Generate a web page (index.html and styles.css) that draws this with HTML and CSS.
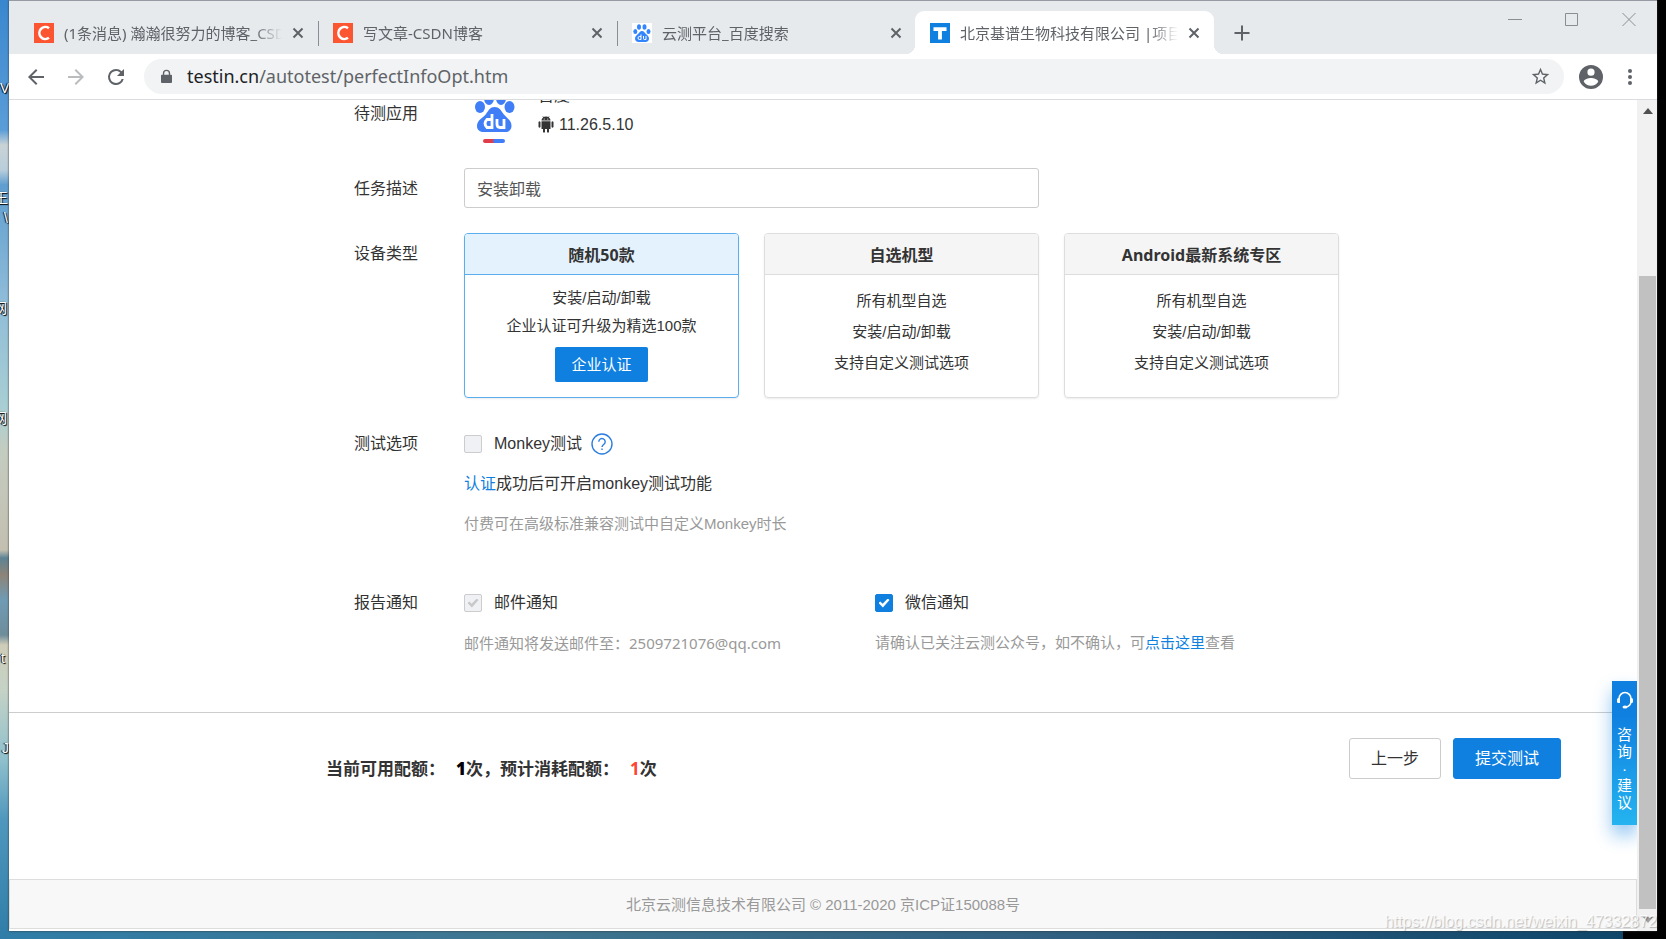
FILE: index.html
```html
<!DOCTYPE html>
<html lang="zh-CN">
<head>
<meta charset="utf-8">
<title>北京基谱生物科技有限公司</title>
<link rel="stylesheet" href="styles.css">
</head>
<body>
<div class="desktop-labels" aria-hidden="true">
  <span class="dl dl-1">V</span>
  <span class="dl dl-2">王</span>
  <span class="dl dl-3">\</span>
  <span class="dl dl-4">网</span>
  <span class="dl dl-5">网</span>
  <span class="dl dl-6">t</span>
  <span class="dl dl-7">J</span>
</div>
<div class="window">
  <header class="tabstrip">
    <div class="tab">
      <svg class="favicon" viewBox="0 0 20 20"><rect width="20" height="20" fill="#fc5531"/><path d="M15 5.2A6 6 0 1 0 15 14.8" fill="none" stroke="#fff" stroke-width="2.6"/></svg>
      <span class="tab-title">(1条消息) 瀚瀚很努力的博客_CSDN博客</span>
      <button class="tab-close" aria-label="关闭"><svg viewBox="0 0 12 12"><path d="M1.5 1.5l9 9M10.500 1.500l-9 9"/></svg></button>
    </div>
    <div class="tab tab-sep">
      <svg class="favicon" viewBox="0 0 20 20"><rect width="20" height="20" fill="#fc5531"/><path d="M15 5.2A6 6 0 1 0 15 14.8" fill="none" stroke="#fff" stroke-width="2.6"/></svg>
      <span class="tab-title">写文章-CSDN博客</span>
      <button class="tab-close" aria-label="关闭"><svg viewBox="0 0 12 12"><path d="M1.5 1.5l9 9M10.500 1.500l-9 9"/></svg></button>
    </div>
    <div class="tab tab-sep">
      <svg class="favicon" viewBox="0 0 20 20"><rect width="20" height="20" fill="#fff"/><g fill="#3385ff"><ellipse cx="7" cy="4" rx="2" ry="2.800"/><ellipse cx="12.500" cy="4" rx="2" ry="2.800"/><ellipse cx="3.300" cy="8.500" rx="2" ry="2.600"/><ellipse cx="16.500" cy="8.500" rx="2" ry="2.600"/><path d="M10 8c2 0 2.500 1.500 4 3s3 2.500 3 4.500-1.500 3.500-3.500 3.500H6.500C4.500 19 3 17.500 3 15.500S4.500 12.500 6 11s2-3 4-3z"/></g><path d="M9 11.500v5H7.500a1.200 1.200 0 0 1 0-3H9M11.500 13v2.500q0 1 1 1H14V13" fill="none" stroke="#fff"/></svg>
      <span class="tab-title">云测平台_百度搜索</span>
      <button class="tab-close" aria-label="关闭"><svg viewBox="0 0 12 12"><path d="M1.5 1.5l9 9M10.500 1.500l-9 9"/></svg></button>
    </div>
    <div class="tab tab-active">
      <svg class="favicon" viewBox="0 0 20 20"><rect width="20" height="20" fill="#1080e0"/><path d="M3.500 6.200h13M10 6v10.500" fill="none" stroke="#fff" stroke-width="3.800"/></svg>
      <span class="tab-title">北京基谱生物科技有限公司 |项目管理</span>
      <button class="tab-close" aria-label="关闭"><svg viewBox="0 0 12 12"><path d="M1.5 1.5l9 9M10.500 1.500l-9 9"/></svg></button>
    </div>
    <button class="new-tab" aria-label="新标签页"><svg viewBox="0 0 16 16"><path d="M8 .5v15M.5 8h15"/></svg></button>
    <div class="window-controls">
      <button aria-label="最小化"><svg viewBox="0 0 14 14"><path d="M0 7.500h14"/></svg></button>
      <button aria-label="最大化"><svg viewBox="0 0 14 14"><path d="M.5 1.500h12v12H.5z"/></svg></button>
      <button aria-label="关闭窗口"><svg viewBox="0 0 14 14"><path d="M.5 1l13 13M13.500 1l-13 13"/></svg></button>
    </div>
  </header>
  <nav class="toolbar">
    <button class="nav-btn" aria-label="后退"><svg viewBox="0 0 24 24"><path d="M20 11H7.830l5.590-5.590L12 4l-8 8 8 8 1.410-1.410L7.830 13H20z"/></svg></button>
    <button class="nav-btn dim" aria-label="前进"><svg viewBox="0 0 24 24"><path d="M12 4l-1.410 1.410L16.170 11H4v2h12.170l-5.580 5.590L12 20l8-8z"/></svg></button>
    <button class="nav-btn" aria-label="刷新"><svg viewBox="0 0 24 24"><path d="M17.650 6.350A7.950 7.950 0 0 0 12 4a8 8 0 1 0 7.730 10h-2.080A6 6 0 1 1 12 6c1.660 0 3.140.69 4.220 1.780L13 11h7V4z"/></svg></button>
    <div class="omnibox">
      <svg class="lock" viewBox="0 0 12 16"><path d="M1 6h1V4.500a4 4 0 0 1 8 0V6h1q1 0 1 1v7q0 1-1 1H1q-1 0-1-1V7q0-1 1-1zm2.500 0h5V4.500a2.500 2.500 0 0 0-5 0z"/></svg>
      <span class="url"><b>testin.cn</b>/autotest/perfectInfoOpt.htm</span>
      <button class="star" aria-label="收藏"><svg viewBox="0 0 24 24"><path d="M22 9.240l-7.190-.62L12 2 9.190 8.630 2 9.240l5.460 4.730L5.820 21 12 17.270 18.180 21l-1.630-7.030zM12 15.400l-3.760 2.270 1-4.280-3.320-2.880 4.380-.38L12 6.100l1.710 4.040 4.380.38-3.320 2.880 1 4.280z"/></svg></button>
    </div>
    <button class="profile" aria-label="用户"><svg viewBox="0 0 24 24"><path fill-rule="evenodd" d="M12 0a12 12 0 1 0 0 24 12 12 0 0 0 0-24zm0 3.600a3.600 3.600 0 1 1 0 7.200 3.600 3.600 0 0 1 0-7.200zm0 17.100a8.600 8.600 0 0 1-7.200-3.900c0-2.400 4.800-3.700 7.200-3.700s7.200 1.300 7.200 3.700a8.600 8.600 0 0 1-7.200 3.900z"/></svg></button>
    <button class="menu" aria-label="菜单"><svg viewBox="0 0 4 18"><circle cx="2" cy="3" r="2"/><circle cx="2" cy="9" r="2"/><circle cx="2" cy="15" r="2"/></svg></button>
  </nav>
  <div class="viewport">
    <main class="page">
      <form class="form">
        <div class="row row-app">
          <span class="label">待测应用</span>
          <div class="app">
            <svg class="app-icon" viewBox="0 0 60 60"><g fill="#3f7ef7"><ellipse cx="25" cy="8" rx="5" ry="7"/><ellipse cx="37" cy="8" rx="5" ry="7"/><ellipse cx="16" cy="17" rx="5" ry="6"/><ellipse cx="45.500" cy="17" rx="5" ry="6"/><path d="M30.500 17c5 0 6 3 9 7s8 6 8 12c0 4-3 6-6 6H20c-4 0-7-2-7-6 0-6 6-8 9-12s4-7 8.500-7z"/></g><path d="M28 24v13.500h-5q-4-4 0-8h5M33 29v5q0 3.500 3 3.500h4V29" fill="none" stroke="#fff" stroke-width="2.800"/><path d="M21 51h10" stroke="#e23c4a" stroke-width="4" stroke-linecap="round"/><path d="M31 51h8" stroke="#3f7ef7" stroke-width="4" stroke-linecap="round"/><path d="M30 51h2" stroke="#3f7ef7" stroke-width="4"/></svg>
            <div class="app-info">
              <span>百度</span>
              <span class="version"><svg viewBox="0 0 15 17"><path fill="#333" d="M3 5.200h9V13H3zM3 4.600a4.500 4 0 0 1 9 0zM0 6q1-1.400 2 0v5q-1 1.400-2 0zM13 6q1-1.400 2 0v5q-1 1.400-2 0zM4.500 12.500h2V16q-1 1.500-2 0zM8.500 12.500h2V16q-1 1.500-2 0z"/><path d="M4.500.5l1 1.500M10.500.5l-1 1.500" stroke="#333"/><circle cx="5.700" cy="3" r=".6" fill="#fff"/><circle cx="9.300" cy="3" r=".6" fill="#fff"/></svg>11.26.5.10</span>
            </div>
          </div>
        </div>
        <div class="row row-desc">
          <label class="label" for="desc">任务描述</label>
          <input class="text-input" id="desc" type="text" value="安装卸载">
        </div>
        <div class="row row-device">
          <span class="label">设备类型</span>
          <div class="cards">
            <section class="card card-on">
              <h3>随机50款</h3>
              <div class="card-body">
                <p>安装/启动/卸载</p>
                <p>企业认证可升级为精选100款</p>
                <button class="btn-small" type="button">企业认证</button>
              </div>
            </section>
            <section class="card">
              <h3>自选机型</h3>
              <div class="card-body">
                <p>所有机型自选</p>
                <p>安装/启动/卸载</p>
                <p>支持自定义测试选项</p>
              </div>
            </section>
            <section class="card">
              <h3>Android最新系统专区</h3>
              <div class="card-body">
                <p>所有机型自选</p>
                <p>安装/启动/卸载</p>
                <p>支持自定义测试选项</p>
              </div>
            </section>
          </div>
        </div>
        <div class="row row-test">
          <span class="label">测试选项</span>
          <div class="stack">
            <div class="check-line">
              <input class="check" type="checkbox" id="monkey" disabled><label for="monkey">Monkey测试</label>
              <svg class="help" viewBox="0 0 22 22"><circle cx="11" cy="11" r="10"/><path d="M7.800 8.800a3.200 3.200 0 1 1 5.200 2.400c-1.300 1-2 1.500-2 2.800"/><path d="M11 15.500v1.500"/></svg>
            </div>
            <p><a class="link" href="#">认证</a>成功后可开启monkey测试功能</p>
            <p class="hint">付费可在高级标准兼容测试中自定义Monkey时长</p>
          </div>
        </div>
        <div class="row row-report">
          <span class="label">报告通知</span>
          <div class="notices">
            <div class="stack">
              <div class="check-line"><input class="check" type="checkbox" id="mail" checked disabled><label for="mail">邮件通知</label></div>
              <p class="hint hint-mail">邮件通知将发送邮件至：2509721076@qq.com</p>
            </div>
            <div class="stack">
              <div class="check-line"><input class="check" type="checkbox" id="wechat" checked><label for="wechat">微信通知</label></div>
              <p class="hint">请确认已关注云测公众号，如不确认，可<a class="link" href="#">点击这里</a>查看</p>
            </div>
          </div>
        </div>
      </form>
      <div class="actions">
        <p class="quota"><span>当前可用配额：</span><span><b>1</b>次，预计消耗配额：</span><span><em>1</em>次</span></p>
        <div class="buttons">
          <button class="btn" type="button">上一步</button>
          <button class="btn btn-primary" type="button">提交测试</button>
        </div>
      </div>
      <footer class="footer">北京云测信息技术有限公司 © 2011-2020 京ICP证150088号</footer>
      <aside class="consult">
        <svg viewBox="0 0 18 18"><path d="M3 12V8a6 6.500 0 0 1 12 0v3q-.5 4-5 5" fill="none" stroke="#fff" stroke-width="1.600"/><rect x="1" y="7" width="3" height="5" rx="1.500" fill="#fff"/><rect x="14" y="7" width="3" height="5" rx="1.500" fill="#fff"/><ellipse cx="9" cy="16" rx="2.500" ry="1.500" fill="#fff"/></svg>
        <div class="consult-text"><span>咨</span><span>询</span><span>·</span><span>建</span><span>议</span></div>
      </aside>
    </main>
    <div class="scrollbar" aria-hidden="true">
      <svg viewBox="0 0 10 6"><path d="M0 6h10L5 0z" fill="#505050"/></svg>
      <div class="thumb"></div>
      <svg viewBox="0 0 10 6"><path d="M0 0h10L5 6z" fill="#a0a0a0"/></svg>
    </div>
  </div>
</div>
<div class="watermark">https://blog.csdn.net/weixin_47332872</div>
</body>
</html>
```
FILE: styles.css
```css
* { box-sizing: border-box; }
body {
  position: relative;
  margin: 0;
  min-height: 100vh;
  display: flex;
  padding: 0 9px 9px 9px;
  overflow: hidden;
  color: #333;
  font: 16px/24px "Liberation Sans", "Noto Sans CJK SC", sans-serif;
  background:
    linear-gradient(#000, #000) right top / 9px 100% no-repeat,
    linear-gradient(#000, #000) right bottom / 43px 9px no-repeat,
    linear-gradient(90deg, #2f7da8, #3f7690 30%, #315f80 65%, #0b4468) left bottom / 100% 9px no-repeat,
    linear-gradient(#3a87cf 0, #5a9dd8 130px, #c9d3d6 145px, #b9cedb 170px, #5f9ed0 185px, #8fbcd8 300px, #a9cfd3 410px, #c4ccc0 450px, #c3bfb0 550px, #5d8394 558px, #8d8478 575px, #6f9bb4 600px, #6f8d9a 635px, #cfcdb8 645px, #c5d2c6 690px, #8fc0cc 760px, #4f97bd 820px, #2f7da8 939px);
}
p, h3 { margin: 0; font-weight: 400; }
button { font: inherit; color: inherit; border: 0; padding: 0; background: none; }
svg { display: block; flex: none; }

.desktop-labels { position: absolute; left: 0; top: 0; width: 9px; height: 100%; overflow: hidden; color: #fff; font-size: 14px; text-shadow: 1px 1px 1px #000, -1px 0 1px #000; }
.dl { position: absolute; left: 0; }
.dl-1 { top: 76px; }
.dl-2 { top: 186px; left: -6px; }
.dl-3 { top: 206px; left: 4px; }
.dl-4 { top: 296px; left: -7px; }
.dl-5 { top: 406px; left: -7px; }
.dl-6 { top: 646px; left: 1px; }
.dl-7 { top: 736px; left: 2px; }

.window { position: relative; flex: 1; min-width: 0; display: flex; flex-direction: column; background: #fff; border-top: 1px solid #969ba3; box-shadow: 0 0 2px #333; }

.tabstrip { display: flex; height: 53px; background: #e6eaed; padding: 10px 0 0 8px; }
.tab { position: relative; width: 299px; display: flex; align-items: center; padding: 0 12px 0 17px; font: 15px/22px "Noto Sans", "Noto Sans CJK SC", sans-serif; color: #5f6368; }
.tab-sep::before { content: ""; position: absolute; left: 2px; top: 10px; width: 1px; height: 25px; background: #8a8d91; }
.tab-active { background: #fff; border-radius: 9px 9px 0 0; padding-left: 15px; padding-right: 14px; margin-left: 1px; }
.tab-active::before, .tab-active::after { content: ""; position: absolute; bottom: 0; width: 9px; height: 9px; }
.tab-active::before { left: -9px; background: radial-gradient(circle at 0 0, transparent 9px, #fff 9px); }
.tab-active::after { right: -9px; background: radial-gradient(circle at 100% 0, transparent 9px, #fff 9px); }
.favicon { width: 20px; height: 20px; margin-right: 10px; }
.tab-title { flex: 1; white-space: nowrap; overflow: hidden; mask-image: linear-gradient(90deg, #000 calc(100% - 28px), transparent); }
.tab-close { padding: 0 0 0 10px; }
.tab-close svg { width: 12px; height: 12px; stroke: #5f6368; stroke-width: 2; }
.new-tab { margin-left: 20px; }
.new-tab svg { width: 16px; height: 16px; stroke: #5f6368; stroke-width: 2; }
.window-controls { margin-left: auto; display: flex; gap: 43px; padding-right: 21px; padding-top: 1px; align-items: flex-start; }
.window-controls svg { width: 14px; height: 14px; fill: none; stroke: #8b8e91; }

.toolbar { display: flex; align-items: center; height: 46px; padding-right: 25px; padding-left: 15px; border-bottom: 1px solid #dadce0; }
.nav-btn { margin-right: 16px; }
.nav-btn svg { width: 24px; height: 24px; fill: #5f6368; }
.nav-btn.dim svg { fill: #babcbe; }
.omnibox { flex: 1; height: 35px; display: flex; align-items: center; background: #f1f3f4; border-radius: 18px; padding: 0 13px 0 17px; }
.lock { width: 11px; height: 15px; fill: #5f6368; margin-right: 15px; }
.url { flex: 1; font: 18px/28px "Noto Sans", sans-serif; color: #5f6368; padding-bottom: 2px; }
.url b { font-weight: 400; color: #202124; }
.star svg { width: 21px; height: 21px; fill: #5f6368; }
.profile { margin: 0 25px 0 15px; }
.profile svg { width: 24px; height: 24px; fill: #5f6368; }
.menu svg { width: 4px; height: 18px; fill: #5f6368; }

.viewport { flex: 1; display: flex; }
.page { position: relative; flex: 1; min-width: 0; display: flex; flex-direction: column; overflow: hidden; }
.scrollbar { width: 20px; background: #f1f1f1; display: flex; flex-direction: column; align-items: center; padding: 8px 1px 8px 2px; }
.scrollbar svg { width: 10px; height: 6px; }
.thumb { width: 100%; flex: 1; background: #c1c1c1; margin: 162px 0 8px; }

.form { padding-left: 345px; }
.row { display: grid; grid-template-columns: 110px minmax(0, 1fr); }
.row-app { margin-top: -16px; }
.row-app .label { padding-top: 18px; }
.row-desc { margin-top: 18px; }
.row-device { margin-top: 25px; }
.row-desc .label, .row-device .label { padding-top: 9px; }
.row-test { margin-top: 34px; }
.row-report { margin-top: 55px; }

.app { display: flex; }
.app-icon { width: 60px; height: 60px; margin-top: 6px; }
.app-info { margin-left: 14px; display: flex; flex-direction: column; line-height: 27px; }
.app-info > span:first-child { line-height: 24px; margin-bottom: 3px; }
.version { display: flex; align-items: center; gap: 5px; }
.version svg { width: 16px; height: 17px; }

.text-input { width: 575px; max-width: 100%; height: 40px; padding: 0 12px; border: 1px solid #ccc; border-radius: 3px; font: inherit; color: #555; background: #fff; }

.cards { display: grid; grid-template-columns: repeat(3, 275px); gap: 25px; }
.card { border: 1px solid #ddd; border-radius: 4px; box-shadow: 0 1px 2px rgba(0, 0, 0, .08); overflow: hidden; text-align: center; }
.card h3 { height: 41px; background: #f5f5f5; border-bottom: 1px solid #ddd; font: bold 16px/42px "Noto Sans", "Noto Sans CJK SC", sans-serif; }
.card-body { padding: 10px 0 15px; font-size: 15px; line-height: 31px; }
.card-on { border-color: #5aaeee; }
.card-on h3 { background: #e4f2fe; border-color: #5aaeee; }
.card-on .card-body { padding-top: 9px; line-height: 28px; }
.btn-small { height: 35px; margin-top: 7px; padding: 1px 16px 0; border-radius: 2px; background: #1080e0; color: #fff; display: inline-block; vertical-align: top; }

.stack { display: flex; flex-direction: column; gap: 16px; }
.check-line { display: flex; align-items: center; }
.check { appearance: none; width: 18px; height: 18px; margin: 0 12px 0 0; border: 1px solid #ccc; border-radius: 2px; background: #f0f1f5; display: grid; place-items: center; }
.check:checked::before { content: ""; width: 11px; height: 9px; background: #c8c8c8; clip-path: polygon(0 50%, 16% 32%, 38% 58%, 84% 0, 100% 18%, 40% 100%); }
.check:checked:enabled { background: #1080e0; border-color: #1080e0; }
.check:checked:enabled::before { background: #fff; }
.help { width: 22px; height: 22px; margin-left: 9px; fill: none; stroke: #2b7de0; stroke-width: 1.4; }
.link { color: #1080e0; text-decoration: none; }
.hint { font-size: 15px; color: #999; }
.hint-mail { font-family: "Noto Sans", "Noto Sans CJK SC", sans-serif; }
.notices { display: grid; grid-template-columns: 411px minmax(0, 1fr); }

.actions { flex: 1; margin-top: 57px; border-top: 1px solid #ccc; padding: 25px 76px 98px 317px; display: flex; justify-content: space-between; align-items: flex-start; }
.quota { display: flex; gap: 11px; margin-top: 19px; font: bold 17px/24px "Noto Sans", "Noto Sans CJK SC", sans-serif; }
.quota b { color: #000; }
.quota em { font-style: normal; color: #ff4433; }
.buttons { display: flex; gap: 12px; }
.btn { height: 41px; padding: 0 21px; border: 1px solid #ccc; border-radius: 3px; background: #fff; }
.btn-primary { background: #1080e0; border-color: #1080e0; color: #fff; }

.footer { height: 50px; margin-bottom: 2px; border: 1px solid #ddd; background: #f8f8f8; color: #999; font-size: 15px; line-height: 50px; text-align: center; }

.consult { position: absolute; right: 0; bottom: 106px; width: 25px; height: 144px; padding-top: 10px; display: flex; flex-direction: column; align-items: center; color: #fff; background: linear-gradient(#1080e0 24%, #24b4f0); box-shadow: 0 10px 18px rgba(16, 128, 224, .45); }
.consult svg { width: 18px; height: 18px; }
.consult-text { display: flex; flex-direction: column; align-items: center; margin-top: 17px; font-size: 15px; line-height: 17px; }

.watermark { position: absolute; right: 9px; bottom: 6px; font-size: 16px; line-height: 24px; color: rgba(255, 255, 255, .8); text-shadow: 1px 1px 1px rgba(0, 0, 0, .25); }
```
